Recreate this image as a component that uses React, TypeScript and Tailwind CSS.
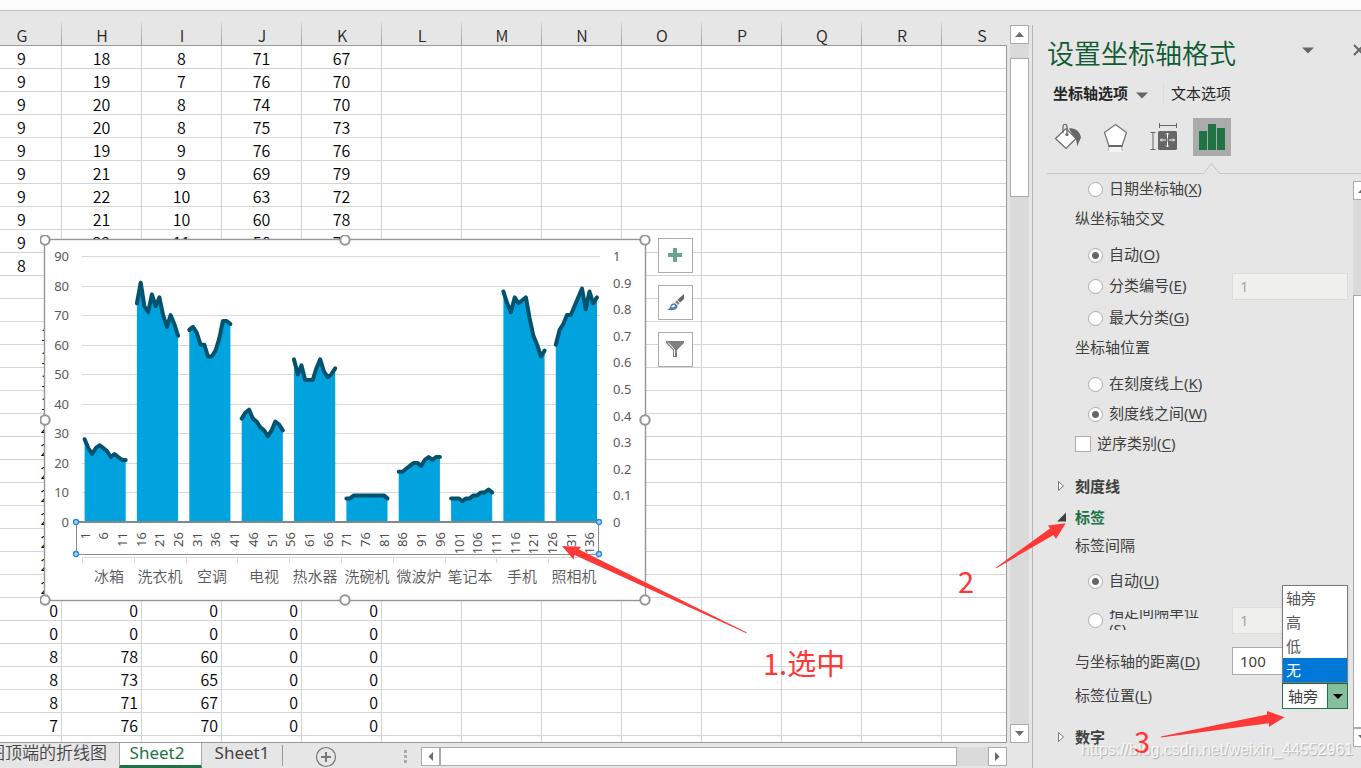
import React from "react";

const COLUMNS = ["G", "H", "I", "J", "K", "L", "M", "N", "O", "P", "Q", "R", "S"];

const TOP_ROWS: string[][] = [
  ["9", "18", "8", "71", "67"],
  ["9", "19", "7", "76", "70"],
  ["9", "20", "8", "74", "70"],
  ["9", "20", "8", "75", "73"],
  ["9", "19", "9", "76", "76"],
  ["9", "21", "9", "69", "79"],
  ["9", "22", "10", "63", "72"],
  ["9", "21", "10", "60", "78"],
  ["9", "22", "11", "56", "74"],
  ["8"],
  [],
  [],
];

const BOTTOM_ROWS: string[][] = [
  ["18"],
  ["15"],
  ["13"],
  ["15"],
  ["26"],
  ["25"],
  ["24"],
  ["22"],
  ["23"],
  ["22"],
  ["21"],
  ["21"],
  ["0", "0", "0", "0", "0"],
  ["0", "0", "0", "0", "0"],
  ["8", "78", "60", "0", "0"],
  ["8", "73", "65", "0", "0"],
  ["8", "71", "67", "0", "0"],
  ["7", "76", "70", "0", "0"],
  [],
];

const SERIES: { name: string; values: number[] }[] = [
  { name: "冰箱", values: [28, 25, 23, 25, 26, 25, 24, 22, 23, 22, 21, 21] },
  { name: "洗衣机", values: [74, 81, 73, 71, 77, 73, 76, 70, 66, 70, 67, 63] },
  { name: "空调", values: [65, 66, 64, 60, 60, 56, 56, 58, 62, 68, 68, 67] },
  { name: "电视", values: [35, 37, 38, 35, 34, 32, 31, 29, 31, 34, 33, 31] },
  { name: "热水器", values: [55, 50, 53, 48, 48, 48, 52, 55, 51, 49, 50, 52] },
  { name: "洗碗机", values: [8, 8, 9, 9, 9, 9, 9, 9, 9, 9, 9, 8] },
  { name: "微波炉", values: [17, 17, 18, 19, 20, 20, 19, 21, 22, 21, 22, 22] },
  { name: "笔记本", values: [8, 8, 8, 7, 8, 8, 9, 9, 10, 10, 11, 10] },
  { name: "手机", values: [78, 74, 71, 76, 74, 75, 76, 69, 63, 60, 56, 58] },
  { name: "照相机", values: [60, 65, 67, 70, 70, 73, 76, 79, 72, 78, 74, 76] },
];

const CJK = "font-['Noto_Sans_CJK_SC',sans-serif]";
const LATIN = "font-['Noto_Sans','Noto_Sans_CJK_SC',sans-serif]";

function Row({ cells, align }: { cells: string[]; align: "center" | "right" }) {
  return (
    <tr>
      {COLUMNS.map((c, i) => (
        <td
          key={c}
          className={
            "h-[23px] border-r border-b border-[#d4d4d4] p-0 pt-0.5 leading-[20px] " +
            (align === "right" ? "pr-[3px] text-right" : i === 0 ? "pr-[18px] text-center" : "text-center")
          }
        >
          {cells[i] ?? ""}
        </td>
      ))}
    </tr>
  );
}

function Grid() {
  return (
    <table className="w-[1022px] table-fixed border-separate border-spacing-0 bg-white text-[16px] font-[350] text-black">
      <colgroup>
        {COLUMNS.map((c, i) => (
          <col key={c} className={i === 0 ? "w-[62px]" : "w-[80px]"} />
        ))}
      </colgroup>
      <thead>
        <tr>
          {COLUMNS.map((c, i) => (
            <th
              key={c}
              scope="col"
              className={
                "h-[23px] border-b border-[#999999] bg-[#e6e6e6] bg-[linear-gradient(to_bottom,#d0d0d0,#999999)] bg-[length:1px_100%] bg-right bg-no-repeat p-0 pt-0.5 text-center leading-[20px] font-[350] text-[#262626] " +
                (i === 0 ? "pr-[18px]" : "")
              }
            >
              {c}
            </th>
          ))}
        </tr>
      </thead>
      <tbody>
        {TOP_ROWS.map((r, i) => (
          <Row key={"t" + i} cells={r} align="center" />
        ))}
        {BOTTOM_ROWS.map((r, i) => (
          <Row key={"b" + i} cells={r} align="right" />
        ))}
      </tbody>
    </table>
  );
}

const STEP = 3.74;
const X0 = 42.7;
const BASE = 287;
const px = (k: number) => X0 + (k + 0.5) * STEP;
const py = (v: number) => BASE - (v * 266) / 90;

function Chart() {
  const ticks = Array.from({ length: 28 }, (_, i) => 1 + i * 5);
  return (
    <svg
      className={"absolute top-[212px] left-[40px] h-[372px] w-[612px] " + LATIN}
      viewBox="0 0 612 372"
      role="img"
      aria-label="折线图"
    >
      <rect x="4.5" y="4.5" width="601" height="361" fill="#ffffff" stroke="#959595" strokeWidth="1.400" />
      {Array.from({ length: 10 }, (_, i) => (
        <g key={i}>
          {i > 0 && <rect x="42" y={Math.round(py(i * 10))} width="518" height="1" fill="#d9d9d9" />}
          <text x="29" y={Math.round(py(i * 10)) + 5} textAnchor="end" fontSize="13" fill="#595959">
            {i * 10}
          </text>
        </g>
      ))}
      {Array.from({ length: 11 }, (_, i) => (
        <text key={i} x="573" y={Math.round(BASE - i * 26.6) + 5} fontSize="13" fill="#595959">
          {i === 10 ? "1" : i === 0 ? "0" : "0." + i}
        </text>
      ))}
      {SERIES.map((s, g) => {
        const pts = s.values.map((v, i) => `${px(g * 14 + i).toFixed(1)},${py(v).toFixed(1)}`);
        const first = px(g * 14).toFixed(1);
        const last = px(g * 14 + 11).toFixed(1);
        return (
          <g key={s.name}>
            <polygon points={`${first},${BASE} ${pts.join(" ")} ${last},${BASE}`} fill="#00a3dd" />
            <polyline
              points={pts.join(" ")}
              fill="none"
              stroke="#00526f"
              strokeWidth="4"
              strokeLinecap="round"
              strokeLinejoin="round"
            />
            <text
              x={Math.round(68.5 + g * 51.7)}
              y="347"
              textAnchor="middle"
              fontSize="15"
              fill="#595959"
              className={CJK + " font-[350]"}
            >
              {s.name}
            </text>
          </g>
        );
      })}
      {ticks.map((t) => {
        const x = Math.round(px(t - 1)) + 5;
        return (
          <text key={t} x={x} y="297" textAnchor="end" fontSize="13" fill="#4d4d4d" transform={`rotate(-90 ${x} 297)`}>
            {t}
          </text>
        );
      })}
      <rect x="36" y="286" width="523" height="2" fill="#7f8a8f" />
      <path d="M36.5 287V319.5H558.5V287" fill="none" stroke="#8c8c8c" strokeWidth="1" />
      <path
        d={"M42 322.5H559 " + Array.from({ length: 10 }, (_, i) => `M${Math.round(42 + i * 51.8)}.5 322V328`).join(" ")}
        stroke="#d9d9d9"
        fill="none"
      />
      {[
        [36, 287],
        [559, 287],
        [36, 319],
        [559, 319],
      ].map(([x, y]) => (
        <circle key={x + "-" + y} cx={x} cy={y} r="2.5" fill="#a9d4f5" stroke="#1e88dc" strokeWidth="1.3" />
      ))}
      {[
        [5, 5],
        [305, 5],
        [605, 5],
        [5, 185],
        [605, 185],
        [5, 365],
        [305, 365],
        [605, 365],
      ].map(([x, y]) => (
        <circle key={x + "-" + y} cx={x} cy={y} r="4.7" fill="#ffffff" stroke="#959595" strokeWidth="2" />
      ))}
    </svg>
  );
}

function ChartButtons() {
  const cls = "flex size-[35px] items-center justify-center border border-[#ababab] bg-white";
  return (
    <div className="absolute top-[215px] left-[658px] flex flex-col gap-3">
      <button className={cls} aria-label="图表元素">
        <svg className="size-[19px]" viewBox="0 0 19 19">
          <path d="M7 2h4v5h5v4h-5v5H7v-5H2V7h5z" fill="#6aa58d" />
        </svg>
      </button>
      <button className={cls} aria-label="图表样式">
        <svg className="size-[19px]" viewBox="0 0 20 20">
          <path d="M19 1v5l-4 4-3-3z" fill="#666666" />
          <path d="M11.5 7.5l3 3-2 2-3-3z" fill="#8a8a8a" />
          <path d="M1 18c3-1 3-3 4-5 1-2 4-3 6-1s1 4-1 5c-3 1.500-6 1-9 1z" fill="#4a7ebb" />
          <path d="M5.500 15c.5-2 2-3 3.500-2.500c1 .5 .5 2-1 2.500z" fill="#ffffff" />
        </svg>
      </button>
      <button className={cls} aria-label="图表筛选器">
        <svg className="size-[19px]" viewBox="0 0 19 19">
          <path d="M0 1h18v2l-7 7v7H7v-7L0 3z" fill="#808080" />
          <path d="M2 2.500L8.500 9.500V16" stroke="#ffffff" strokeWidth="1" fill="none" />
        </svg>
      </button>
    </div>
  );
}

const scrollBtn = "flex size-[19px] shrink-0 items-center justify-center border border-[#ababab] bg-white";

function Arrow({ d }: { d: string }) {
  return (
    <svg className="size-[11px] shrink-0" viewBox="0 0 11 11">
      <path d={d} fill="#6b6b6b" />
    </svg>
  );
}
const UP = "M1 8L5.500 3L10 8z";
const DOWN = "M1 3H10L5.500 8z";
const LEFT = "M8 1V10L3.500 5.500z";
const RIGHT = "M3 1V10L7.500 5.500z";

function VerticalScroll() {
  return (
    <div className="mt-0.5 mr-[3px] flex h-[718px] w-[19px] shrink-0 flex-col self-start bg-[#dadada]">
      <button className={scrollBtn} aria-label="向上滚动">
        <Arrow d={UP} />
      </button>
      <div className="mt-[14px] h-[139px] border border-[#ababab] bg-white" />
      <div className="flex-1" />
      <button className={scrollBtn} aria-label="向下滚动">
        <Arrow d={DOWN} />
      </button>
    </div>
  );
}

function SheetTabs() {
  return (
    <div className={"flex h-[25px] shrink-0 text-[17px] leading-[20px] text-[#444444] " + LATIN}>
      <button className="flex w-[119px] shrink-0 justify-end overflow-hidden pr-3 font-[350] whitespace-nowrap">
        图顶端的折线图
      </button>
      <button className="w-[83px] shrink-0 border-x border-b-[3px] border-x-[#ababab] border-b-[#217346] bg-white pr-[7px] pb-0.5 text-[#217346]">
        Sheet2
      </button>
      <button className="w-[80px] shrink-0 pb-1.5">Sheet1</button>
      <div className="my-0.5 w-px bg-[#999999]" />
      <button className="ml-[32px] flex items-center pt-0.5" aria-label="新工作表">
        <svg className="size-[22px]" viewBox="0 0 22 22">
          <circle cx="11" cy="11" r="9.500" fill="none" stroke="#777777" strokeWidth="1.200" />
          <path d="M11 6v10M6 11h10" stroke="#777777" strokeWidth="2" />
        </svg>
      </button>
      <div className="mt-[7px] ml-[67px] flex w-[3px] shrink-0 flex-col gap-[2px]">
        <i className="size-[3px] bg-[#ababab]" />
        <i className="size-[3px] bg-[#ababab]" />
        <i className="size-[3px] bg-[#ababab]" />
      </div>
      <div className="mt-1 ml-[14px] flex h-[19px] flex-1 bg-[#dadada]">
        <button className={scrollBtn} aria-label="向左滚动">
          <Arrow d={LEFT} />
        </button>
        <div className="mr-[31px] flex-1 border border-[#ababab] bg-white" />
        <button className={scrollBtn} aria-label="向右滚动">
          <Arrow d={RIGHT} />
        </button>
      </div>
    </div>
  );
}

function Key({ k }: { k: string }) {
  return (
    <>
      (<u className="underline-offset-2">{k}</u>)
    </>
  );
}

function Radio({
  id,
  group,
  label,
  k,
  checked,
  h,
  children,
}: {
  id: string;
  group: string;
  label: string;
  k: string;
  checked?: boolean;
  h: string;
  children?: React.ReactNode;
}) {
  return (
    <div className={"flex items-center pr-[5px] pl-[55px] " + h}>
      <input
        id={id}
        type="radio"
        name={group}
        defaultChecked={checked}
        className="mr-[6px] size-[15px] shrink-0 appearance-none rounded-full border border-[#ababab] bg-white checked:bg-[radial-gradient(circle,#666666_3px,#ffffff_4px)]"
      />
      <label htmlFor={id} className="pb-0.5">
        {label}
        <Key k={k} />
      </label>
      {children}
    </div>
  );
}

const disabledInput =
  "ml-auto h-[27px] w-[116px] border border-[#dcdcdc] bg-[#efefed] px-[7px] text-[15px] text-[#a8a8a0]";

function Section({ label, open, h }: { label: string; open?: boolean; h: string }) {
  return (
    <button className={"flex w-full items-center pl-[24px] font-bold " + h + (open ? " text-[#217346]" : "")}>
      <svg className="mr-2 size-[10px]" viewBox="0 0 10 10">
        {open ? (
          <path d="M9 0.500V9.500H0z" fill="#404040" />
        ) : (
          <path d="M1.500 0.500V9.500L6.500 5z" fill="#ffffff" stroke="#777777" />
        )}
      </svg>
      {label}
    </button>
  );
}

function FormatPane() {
  return (
    <aside
      className={
        "relative mt-0.5 flex w-[329px] shrink-0 flex-col overflow-hidden border-l border-[#b4b4b4] text-[15px] text-[#404040] " +
        LATIN
      }
    >
      <header className="flex h-[56px] items-center pl-[14px]">
        <h1 className={"text-[27px] leading-[52px] font-[350] whitespace-nowrap text-[#0f5a32] " + CJK}>
          设置坐标轴格式
        </h1>
        <button className="-mt-1.5 ml-[66px] shrink-0" aria-label="任务窗格选项">
          <svg className="h-[7px] w-[12px]" viewBox="0 0 12 7">
            <path d="M0 0.500H12L6 6.500z" fill="#666666" />
          </svg>
        </button>
        <button className="-mt-1.5 ml-[39px] shrink-0" aria-label="关闭">
          <svg className="size-[12px]" viewBox="0 0 12 12">
            <path d="M1 1L11 11M11 1L1 11" stroke="#666666" strokeWidth="2" />
          </svg>
        </button>
      </header>
      <nav className="flex h-[26px] items-center pb-0.5 pl-[20px] text-[#262626]">
        <button className="flex items-center gap-[8px] font-bold">
          坐标轴选项
          <svg className="mt-1 h-[7px] w-[12px]" viewBox="0 0 12 7">
            <path d="M0 0.500H12L6 6.500z" fill="#666666" />
          </svg>
        </button>
        <div className="ml-[15px] h-[22px] w-px bg-[#dcdcdc]" />
        <button className="ml-[7px]">文本选项</button>
      </nav>
      <div className="flex h-[55px] items-center pt-[5px] pl-[20px]">
        <button aria-label="填充与线条">
          <svg className="h-[32px] w-[30px]" viewBox="0 0 30 32">
            <path d="M16 7.500c6-1 11 3 12 9l-4 9c0-4-.5-7-2-8z" fill="#666666" />
            <path
              d="M13 7.500L23 17.500L13 27.500L2.500 17.500z"
              fill="#ffffff"
              stroke="#666666"
              strokeWidth="1.200"
            />
            <path d="M10 12V5.500c0-3 4-3 4 0v8" fill="none" stroke="#666666" strokeWidth="1.200" />
            <circle cx="14" cy="13.500" r="1.600" fill="#666666" />
          </svg>
        </button>
        <button className="ml-[18px]" aria-label="效果">
          <svg className="h-[32px] w-[28px]" viewBox="0 0 28 32">
            <path d="M8 25h13l2 6H6z" fill="#f4f4f4" />
            <path d="M8 26l-1 4M20.500 26l1 4" stroke="#b0b0b0" />
            <path d="M14.500 3.500L25.500 11.500L21 25H8L3.500 11.500z" fill="#ffffff" stroke="#777777" strokeWidth="1.300" />
            <path d="M7.500 25H21.500" stroke="#666666" strokeWidth="2" />
          </svg>
        </button>
        <button className="ml-[20px]" aria-label="大小与属性">
          <svg className="h-[32px] w-[30px]" viewBox="0 0 30 32">
            <path
              d="M10.500 2v5M27.500 2v5M10.500 4.500h17M1.500 11.500h5M1.500 28.500h5M4 11.500v17"
              stroke="#666666"
              fill="none"
            />
            <rect x="9" y="10" width="19" height="19" rx="1.500" fill="#666666" />
            <path
              d="M18.500 12v14M11.500 19h14M17 13.500l1.500-1.500l1.500 1.500M17 24.500l1.500 1.500l1.500-1.500M13 17.500l-1.500 1.500l1.500 1.500M24 17.500l1.500 1.500l-1.500 1.500"
              stroke="#ffffff"
              fill="none"
            />
            <rect x="17" y="17.500" width="3" height="3" fill="#666666" />
            <rect x="18" y="18.500" width="1" height="1" fill="#ffffff" />
          </svg>
        </button>
        <button
          className="ml-[14px] flex size-[38px] items-center justify-center bg-[#ababab]"
          aria-label="坐标轴选项"
        >
          <svg className="size-[26px]" viewBox="0 0 26 26">
            <path d="M0 7h8v19H0zM9 0h8v26H9zM18 4h8v22h-8z" fill="#217346" />
          </svg>
        </button>
      </div>
      <svg className="ml-[14px] h-[12px] w-[330px] shrink-0" viewBox="0 0 330 12">
        <path d="M0 11.500H156.500L164.500 1.500L172.500 11.500H330" fill="none" stroke="#c6c6c6" />
      </svg>
      <div className="flex">
        <div className="w-[320px] shrink-0">
          <Radio id="date" group="type" label="日期坐标轴" k="X" h="h-[30px]" />
          <p className="mb-2 pl-[42px] leading-[28px]">纵坐标轴交叉</p>
          <Radio id="cross-auto" group="cross" label="自动" k="O" checked h="h-[30px]" />
          <Radio id="cross-num" group="cross" label="分类编号" k="E" h="h-[32px]">
            <input className={disabledInput} defaultValue="1" disabled aria-label="分类编号" />
          </Radio>
          <Radio id="cross-max" group="cross" label="最大分类" k="G" h="h-[32px]" />
          <p className="mb-2 pl-[42px] leading-[26px]">坐标轴位置</p>
          <Radio id="pos-on" group="pos" label="在刻度线上" k="K" h="h-[32px]" />
          <Radio id="pos-between" group="pos" label="刻度线之间" k="W" checked h="h-[28px]" />
          <div className="mb-2.5 flex h-[32px] items-center pl-[42px]">
            <input
              id="reverse"
              type="checkbox"
              className="mr-[6px] size-[16px] appearance-none border border-[#ababab] bg-white"
            />
            <label htmlFor="reverse" className="pb-0.5">
              逆序类别
              <Key k="C" />
            </label>
          </div>
          <Section label="刻度线" h="h-[32px]" />
          <Section label="标签" open h="h-[30px]" />
          <p className="mb-2 pl-[42px] leading-[26px]">标签间隔</p>
          <Radio id="gap-auto" group="gap" label="自动" k="U" checked h="h-[30px]" />
          <div className="flex h-[48px] items-center pr-[5px] pl-[55px]">
            <input
              id="gap-unit"
              type="radio"
              name="gap"
              className="mr-[6px] size-[15px] shrink-0 appearance-none rounded-full border border-[#ababab] bg-white"
            />
            <label
              htmlFor="gap-unit"
              className="flex h-[20px] w-[100px] items-center overflow-hidden leading-[18px]"
            >
              <span>
                指定间隔单位
                <br />
                <Key k="S" />
              </span>
            </label>
            <input className={disabledInput} defaultValue="1" disabled aria-label="指定间隔单位" />
          </div>
          <div className="flex h-[34px] items-center pr-[5px] pl-[42px]">
            <label htmlFor="distance">
              与坐标轴的距离
              <Key k="D" />
            </label>
            <input
              id="distance"
              defaultValue="100"
              className="ml-auto h-[28px] w-[116px] border border-[#ababab] bg-white px-[7px] text-[15px] text-[#404040]"
            />
          </div>
          <div className="mb-2 flex h-[36px] items-center pr-[5px] pl-[42px]">
            <label htmlFor="label-pos" className="pb-0.5">
              标签位置
              <Key k="L" />
            </label>
            <div className="relative ml-auto">
              <div className="flex h-[26px] w-[66px] border border-[#217346] bg-white">
                <select
                  id="label-pos"
                  defaultValue="轴旁"
                  className="w-full appearance-none bg-transparent pl-[5px] text-[15px] leading-[24px] outline-none"
                >
                  <option>轴旁</option>
                  <option>高</option>
                  <option>低</option>
                  <option>无</option>
                </select>
                <span className="pointer-events-none flex w-[20px] shrink-0 items-center justify-center border-l border-[#217346] bg-[#86bfa0]">
                  <svg className="h-[5px] w-[10px]" viewBox="0 0 10 5">
                    <path d="M0 0H10L5 5z" fill="#000000" />
                  </svg>
                </span>
              </div>
              <ul
                role="listbox"
                aria-label="标签位置"
                className="absolute bottom-full left-0 w-[66px] border border-[#7a7a86] bg-white leading-[24px] text-[#555555] shadow"
              >
                <li role="option" aria-selected="false" className="pl-[3px]">
                  轴旁
                </li>
                <li role="option" aria-selected="false" className="pl-[3px]">
                  高
                </li>
                <li role="option" aria-selected="false" className="pl-[3px]">
                  低
                </li>
                <li role="option" aria-selected="true" className="bg-[#0078d7] pl-[3px] text-white">
                  无
                </li>
              </ul>
            </div>
          </div>
          <Section label="数字" h="h-[30px]" />
        </div>
        <div className="mt-[7px] flex h-[566px] w-[19px] shrink-0 flex-col bg-[#dadada]">
          <button className={scrollBtn} aria-label="向上滚动">
            <Arrow d={UP} />
          </button>
          <div className="mt-[95px] flex-1 border border-[#ababab] bg-white" />
          <button className={scrollBtn} aria-label="向下滚动">
            <Arrow d={DOWN} />
          </button>
        </div>
      </div>
      <p className="absolute bottom-[6px] left-[48px] font-['Liberation_Sans',sans-serif] text-[16px] leading-[24px] whitespace-nowrap text-white/80 [text-shadow:1px_1px_1px_#00000040]">
        https://blog.csdn.net/weixin_44552961
      </p>
    </aside>
  );
}

export default function App() {
  return (
    <div className={"flex h-screen flex-col overflow-hidden bg-[#e6e6e6] " + CJK}>
      <div className="h-[11px] shrink-0 border-b border-[#c0c0c0] bg-[#fdfdfd]" />
      <div className="relative flex min-h-0 flex-1 pt-3">
        <main className="flex min-w-0 flex-1 flex-col">
          <div className="flex min-h-0 flex-1">
            <div className="relative mr-[3px] min-w-0 flex-1 overflow-hidden border-b border-[#999999]">
              <Grid />
              <div className="absolute top-[22px] right-0 bottom-0 w-px bg-[#999999]" />
              <Chart />
              <ChartButtons />
              <svg className="absolute top-[517px] left-[555px] h-[160px] w-[300px]" viewBox="0 0 300 160">
                <path d="M7 6L26 6.700L24 9.500L192 92.500L191 93L19.500 15L18.500 19.500z" fill="#fe3838" />
                <text x="208" y="135" fontSize="29" fill="#fe3838">
                  1.选中
                </text>
              </svg>
            </div>
            <VerticalScroll />
          </div>
          <div className="mr-[25px]">
            <SheetTabs />
          </div>
        </main>
        <FormatPane />
        <svg
          className="pointer-events-none absolute right-[61px] bottom-0 h-[268px] w-[350px]"
          viewBox="0 0 350 268"
        >
          <path d="M115.700 23.300L98 25.500L100 28.500L46 67.500V68.500L103.500 35L106 39z" fill="#fe3838" />
          <path d="M334.500 217.300L317 211V214.500L211 236.500V237.500L319 223.200V227z" fill="#fe3838" />
          <text x="8" y="93" fontSize="29" fill="#fe3838">
            2
          </text>
          <text x="184" y="253" fontSize="29" fill="#fe3838">
            3
          </text>
        </svg>
      </div>
    </div>
  );
}
